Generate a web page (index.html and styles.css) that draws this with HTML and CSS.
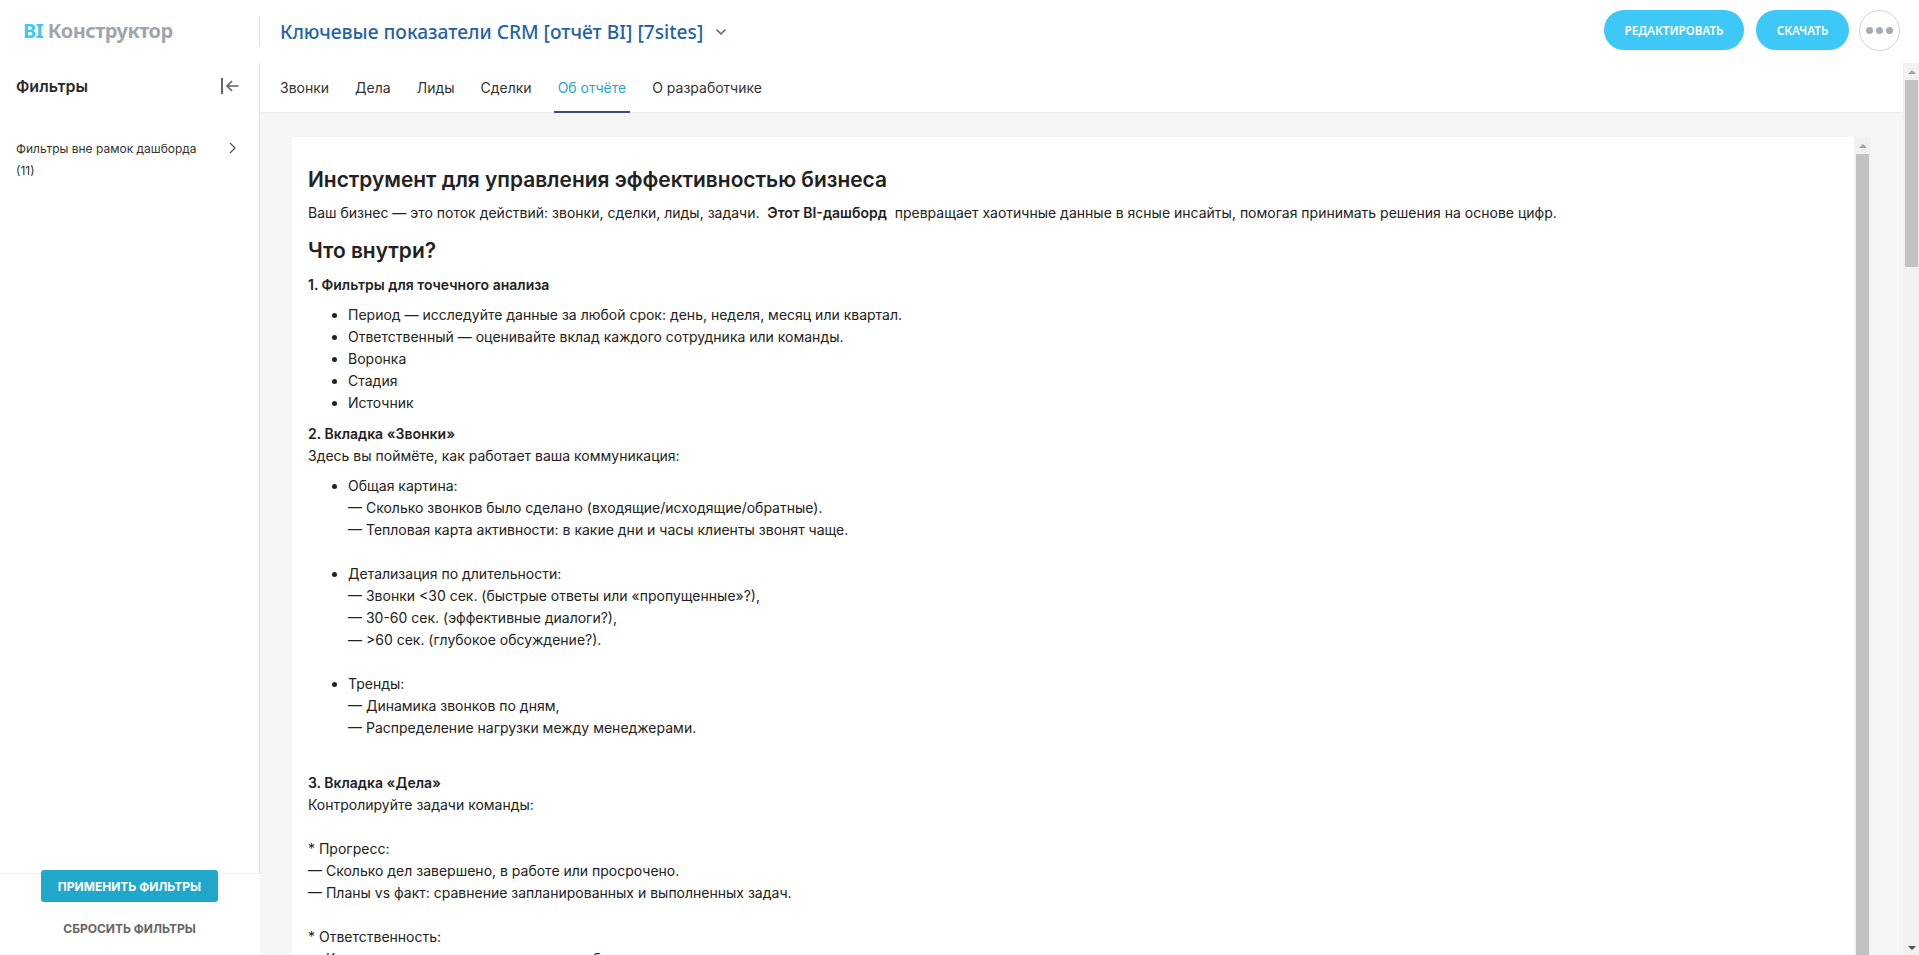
FILE: index.html
```html
<!DOCTYPE html>
<html lang="ru">
<head>
<meta charset="utf-8">
<title>BI Конструктор</title>
<link rel="stylesheet" href="styles.css">
</head>
<body>
<div class="app">
  <header class="topbar">
    <div class="logo-cell"><span class="logo"><span class="logo-bi">BI</span> Конструктор</span></div>
    <div class="title-cell">
      <span class="report-title">Ключевые показатели CRM [отчёт BI] [7sites]</span>
      <svg class="title-chevron" width="12" height="8" viewBox="0 0 12 8"><path d="M1.5 1.5 6 6l4.5-4.5" fill="none" stroke="#55606e" stroke-width="1.5"/></svg>
    </div>
    <div class="actions">
      <button class="pill pill-edit">РЕДАКТИРОВАТЬ</button>
      <button class="pill pill-dl">СКАЧАТЬ</button>
      <button class="more"><span></span><span></span><span></span></button>
    </div>
  </header>
  <div class="workspace">
    <aside class="sidebar">
      <div class="sidebar-body">
        <div class="sidebar-head">
          <span class="sidebar-title">Фильтры</span>
          <svg class="collapse" width="18" height="16" viewBox="0 0 18 16"><path d="M1 0v16" stroke="#666" stroke-width="2" fill="none"/><path d="M17.5 8H6M11 3 6 8l5 5" stroke="#666" stroke-width="1.6" fill="none"/></svg>
        </div>
        <div class="filter-group">
          <span class="filter-label">Фильтры вне рамок дашборда (11)</span>
          <svg class="filter-chevron" width="10" height="12" viewBox="0 0 10 12"><path d="M2 1l5 5-5 5" fill="none" stroke="#555" stroke-width="1.3"/></svg>
        </div>
      </div>
      <div class="sidebar-foot">
        <button class="apply">ПРИМЕНИТЬ ФИЛЬТРЫ</button>
        <button class="reset">СБРОСИТЬ ФИЛЬТРЫ</button>
      </div>
    </aside>
    <main class="main">
      <nav class="tabs">
        <a class="tab">Звонки</a>
        <a class="tab">Дела</a>
        <a class="tab">Лиды</a>
        <a class="tab">Сделки</a>
        <a class="tab tab-active">Об отчёте</a>
        <a class="tab">О разработчике</a>
      </nav>
      <div class="canvas">
        <section class="card">
          <article class="doc">
            <h1>Инструмент для управления эффективностью бизнеса</h1>
            <p class="lead">Ваш бизнес — это поток действий: звонки, сделки, лиды, задачи. &nbsp;<b>Этот BI-дашборд</b> &nbsp;превращает хаотичные данные в ясные инсайты, помогая принимать решения на основе цифр.</p>
            <h2>Что внутри?</h2>
            <p class="sec"><b>1. Фильтры для точечного анализа</b></p>
            <ul>
              <li>Период — исследуйте данные за любой срок: день, неделя, месяц или квартал.</li>
              <li>Ответственный — оценивайте вклад каждого сотрудника или команды.</li>
              <li>Воронка</li>
              <li>Стадия</li>
              <li>Источник</li>
            </ul>
            <p class="sec"><b>2. Вкладка «Звонки»</b><br>Здесь вы поймёте, как работает ваша коммуникация:</p>
            <ul>
              <li>Общая картина:<br>— Сколько звонков было сделано (входящие/исходящие/обратные).<br>— Тепловая карта активности: в какие дни и часы клиенты звонят чаще.<br>&nbsp;</li>
              <li>Детализация по длительности:<br>— Звонки &lt;30 сек. (быстрые ответы или «пропущенные»?),<br>— 30-60 сек. (эффективные диалоги?),<br>— &gt;60 сек. (глубокое обсуждение?).<br>&nbsp;</li>
              <li>Тренды:<br>— Динамика звонков по дням,<br>— Распределение нагрузки между менеджерами.<br>&nbsp;</li>
            </ul>
            <p class="sec sec-wide"><b>3. Вкладка «Дела»</b><br>Контролируйте задачи команды:<br>&nbsp;<br>* Прогресс:<br>— Сколько дел завершено, в работе или просрочено.<br>— Планы vs факт: сравнение запланированных и выполненных задач.<br>&nbsp;<br>* Ответственность:<br>— Кто из менеджеров закрывает задачи быстрее всего.</p>
          </article>
          <div class="scrollbar scrollbar-inner">
            <span class="sb-btn"><i class="arrow-up"></i></span>
            <span class="sb-thumb sb-thumb-fill"></span>
          </div>
        </section>
      </div>
    </main>
    <div class="scrollbar scrollbar-outer">
      <span class="sb-btn"><i class="arrow-up"></i></span>
      <span class="sb-thumb sb-thumb-outer"></span>
      <span class="sb-rest"></span>
      <span class="sb-btn sb-btn-end"><i class="arrow-down"></i></span>
    </div>
  </div>
</div>
</body>
</html>
```
FILE: styles.css
```css
* { box-sizing: border-box; }
html, body { margin: 0; height: 100%; overflow: hidden; background: #fff; }
body { font-family: Inter, "Noto Sans", sans-serif; color: #222; font-size: 14px; }
button { font-family: inherit; border: 0; padding: 0; cursor: pointer; }

.app { display: flex; flex-direction: column; height: 955px; width: 1919px; }

.topbar { display: flex; align-items: center; height: 63px; flex: none; padding-bottom: 1px; }
.logo-cell { width: 260px; height: 30px; display: flex; align-items: center; padding-left: 23px; border-right: 1px solid #dfdfdf; flex: none; }
.logo { font: 700 20px/1 "Noto Sans", sans-serif; color: #a0a5ac; letter-spacing: -0.5px; white-space: nowrap; }
.logo-bi { color: #3ec8f8; }
.title-cell { display: flex; align-items: center; padding: 2px 0 0 20px; flex: 1; }
.report-title { font: 500 19.2px/1 "Noto Sans", sans-serif; color: #1f63a8; white-space: nowrap; }
.title-chevron { margin-left: 12px; }
.actions { display: flex; align-items: center; padding-right: 19px; padding-bottom: 2px; }
.pill { height: 40px; border-radius: 20px; background: #3ec8f8; color: #fff; font: 600 11.7px/40px "Noto Sans", sans-serif; }
.pill-edit { width: 140px; margin-right: 12px; }
.pill-dl { width: 93px; margin-right: 10px; }
.more { width: 41px; height: 41px; border-radius: 50%; background: #fff; border: 1px solid #cfd4da; display: flex; align-items: center; justify-content: center; gap: 3px; }
.more span { width: 7px; height: 7px; border-radius: 50%; background: #a6abb3; }

.workspace { display: flex; flex: 1; min-height: 0; }

.sidebar { width: 260px; flex: none; display: flex; flex-direction: column; }
.sidebar-body { flex: 1; border-right: 1px solid #dfdfdf; padding: 14px 21px 0 16px; }
.sidebar-head { display: flex; justify-content: space-between; align-items: center; height: 18px; }
.sidebar-title { font-weight: 600; font-size: 16px; color: #2b2b2b; }
.collapse { margin-right: -1px; }
.filter-group { display: flex; justify-content: space-between; align-items: flex-start; margin-top: 43px; }
.filter-label { font-size: 12px; line-height: 22px; color: #333; width: 190px; }
.filter-chevron { margin-top: 4px; }
.sidebar-foot { height: 82px; flex: none; border-top: 1px solid #efefef; padding-right: 1px; display: flex; flex-direction: column; align-items: center; }
.apply { width: 177px; height: 32px; margin-top: -4px; border-radius: 3px; background: #20a8cc; color: #fff; font-weight: 700; font-size: 12px; position: relative; }
.reset { background: none; color: #666; font-weight: 700; font-size: 12px; margin-top: 19px; }

.main { flex: 1; min-width: 0; display: flex; flex-direction: column; }
.tabs { display: flex; height: 50px; flex: none; border-bottom: 1px solid #ececec; padding-left: 16px; gap: 18px; }
.tab { padding: 0 4px; line-height: 50px; color: #333; font-size: 14px; height: 50px; white-space: nowrap; }
.tab-active { color: #2aa7cc; border-bottom: 2px solid #3c4a7a; }
.canvas { flex: 1; min-height: 0; background: #f6f6f6; padding: 24px 32px 0; overflow: hidden; }
.card { display: flex; background: #fff; height: 100%; }
.doc { flex: 1; min-width: 0; padding: 28px 16px 0; overflow: hidden; font-size: 14px; line-height: 22px; color: #222; }
.doc h1 { margin: 0 0 7px; font-size: 20.9px; line-height: 30px; font-weight: 600; }
.doc h2 { margin: 12px 0 0; font-size: 20.9px; line-height: 30px; font-weight: 600; }
.doc p { margin: 0; }
.doc .sec { margin: 8px 0; }
.doc .sec-wide { margin-top: 11px; }
.doc b { font-weight: 600; }
.doc ul { margin: 8px 0 9px; padding-left: 40px; }

.scrollbar { display: flex; flex-direction: column; background: #f1f1f1; width: 17px; flex: none; padding: 0 2px; }
.scrollbar-outer { width: 16px; padding: 0 1px 0 2px; }
.sb-btn { height: 17px; display: flex; align-items: center; justify-content: center; flex: none; }
.sb-btn-end { height: 14px; }
.arrow-up { width: 0; height: 0; border: 4px solid transparent; border-top: 0; border-bottom: 4px solid #a3a3a3; }
.arrow-down { width: 0; height: 0; border: 4px solid transparent; border-bottom: 0; border-top: 4px solid #505050; }
.sb-thumb { background: #c1c1c1; display: block; }
.sb-thumb-fill { flex: 1; }
.sb-thumb-outer { height: 187px; flex: none; }
.sb-rest { flex: 1; }
```
